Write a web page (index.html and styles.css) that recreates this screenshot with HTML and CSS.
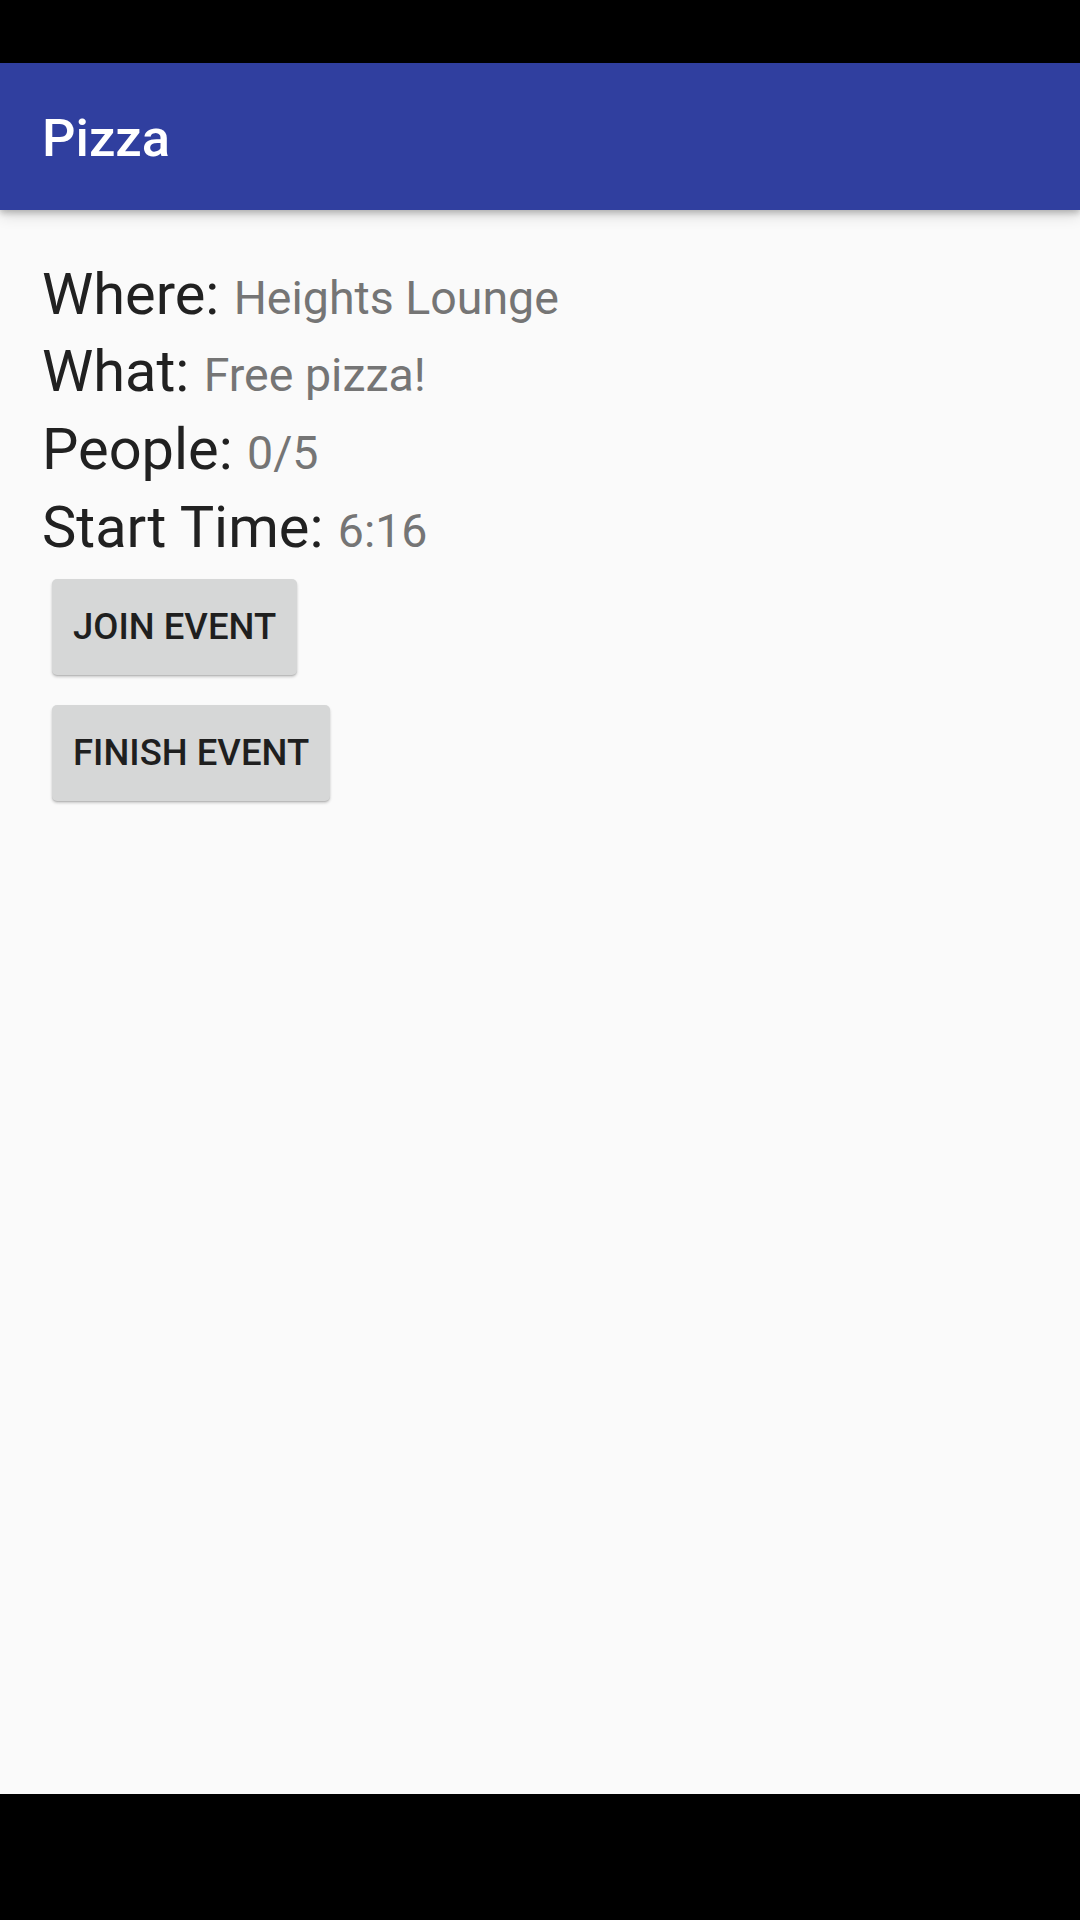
FILE: index.html
```html
<!DOCTYPE html>
<html>
<head>
<meta charset="utf-8">
<link rel="stylesheet" href="styles.css">
</head>
<body>
<div class="screen">
  <div class="status-bar"></div>
  <header class="app-bar"><span class="title">Pizza</span></header>
  <main class="content">
    <div class="row"><span class="label">Where:</span> <span class="value">Heights Lounge</span></div>
    <div class="row"><span class="label">What:</span> <span class="value">Free pizza!</span></div>
    <div class="row"><span class="label">People:</span> <span class="value">0/5</span></div>
    <div class="row"><span class="label">Start Time:</span> <span class="value">6:16</span></div>
    <div class="buttons">
      <button class="btn">JOIN EVENT</button>
      <button class="btn">FINISH EVENT</button>
    </div>
  </main>
  <div class="nav-bar"></div>
</div>
</body>
</html>
```

FILE: styles.css
```css
* { box-sizing: border-box; }
html, body { margin: 0; padding: 0; }
body {
  font-family: Roboto, "Liberation Sans", sans-serif;
  background: #000;
}
.screen {
  width: 1080px;
  height: 1920px;
  display: flex;
  flex-direction: column;
  overflow: hidden;
}
.status-bar {
  height: 63px;
  background: #000;
  flex: none;
}
.app-bar {
  height: 147px;
  flex: none;
  background: #303f9f;
  display: flex;
  align-items: center;
  padding-left: 42px;
  position: relative;
  z-index: 2;
  box-shadow: 0 3px 6px rgba(0,0,0,0.22), 0 6px 14px rgba(0,0,0,0.12);
}
.title {
  color: #fff;
  font-size: 52.5px;
  font-weight: 500;
  line-height: 1;
  padding-top: 4px;
}
.content {
  flex: 1;
  background: #fafafa;
  padding: 45.7px 42px 0 42px;
}
.row {
  font-size: 57.75px;
  line-height: 77.8px;
  white-space: nowrap;
}
.label { color: #212121; }
.value { color: #757575; font-size: 46.5px; line-height: 46px; }
.buttons {
  display: flex;
  flex-direction: column;
  align-items: flex-start;
  gap: 30px;
  padding-top: 12px;
  padding-left: 10px;
}
.btn {
  height: 96px;
  border: none;
  border-radius: 5px;
  background: #d6d7d7;
  color: #1f1f1f;
  font-family: Roboto, "Liberation Sans", sans-serif;
  font-size: 36.5px;
  font-weight: 500;
  letter-spacing: 0;
  padding: 0 21px;
  box-shadow: 0 2px 3px rgba(0,0,0,0.2), 0 1px 1px rgba(0,0,0,0.1);
}
.nav-bar {
  height: 126px;
  flex: none;
  background: #000;
}
```
